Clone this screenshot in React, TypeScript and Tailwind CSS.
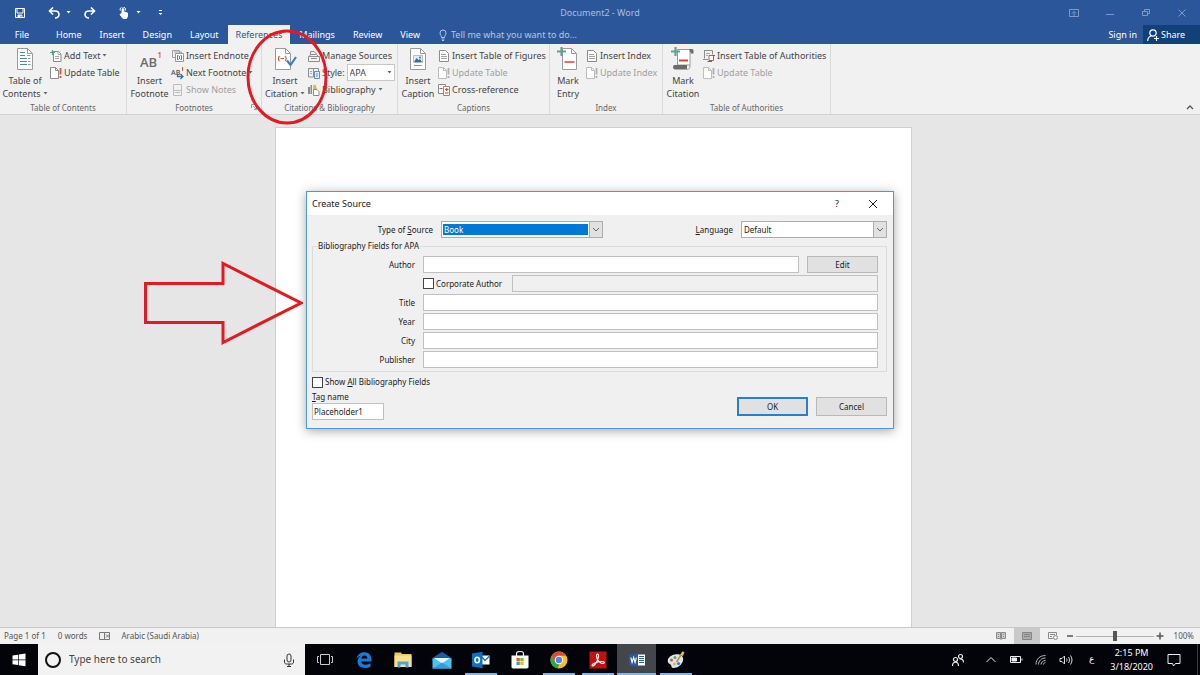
import { ReactNode, useState } from 'react';
import clsx from 'clsx';

type IconProps = { className?: string };

type SmallCommand = {
  label: string;
  icon: ReactNode;
  disabled?: boolean;
  caret?: boolean;
};

const Caret = ({ className }: IconProps) => (
  <svg viewBox="0 0 5 3" className={clsx('h-[3px] w-[5px] shrink-0', className)} fill="currentColor">
    <path d="M.5 0h4L2.500 2.500z" />
  </svg>
);

/* ---------- ribbon icons ---------- */

const TocIcon = () => (
  <svg viewBox="0 0 18 24" className="h-6 w-[18px]" fill="none">
    <path d="M1.5 1.5h10l5 5v16h-15z" fill="#fff" stroke="#9a9a9a" />
    <path d="M11.5 1.5v5h5" stroke="#9a9a9a" />
    <path d="M4 5.500h5M4 8.500h5M4 11.500h7M4 14.500h7M4 17.500h7" stroke="#4a84bd" />
    <path d="M12 11.500h2.500M12 14.500h2.500M12 17.500h2.500M11 8.500h3.500" stroke="#999" />
  </svg>
);

const FootnoteIcon = () => (
  <svg viewBox="0 0 26 24" className="h-6 w-[26px]" fontFamily="Open Sans" fontWeight="600">
    <text x="3" y="20" fontSize="13" fill="#6a6a6a">AB</text>
    <text x="20" y="11" fontSize="9" fill="#d9603b">1</text>
  </svg>
);

const CitationIcon = () => (
  <svg viewBox="0 0 24 24" className="h-6 w-6" fill="none">
    <path d="M2.500 1.500h10l5 5v16h-15z" fill="#fff" stroke="#9a9a9a" />
    <path d="M12.500 1.500v5h5" stroke="#9a9a9a" />
    <path d="M6.500 9c-1.500 1.500-1.500 4 0 5M12 9c1.500 1.500 1.500 4 0 5M7.500 11.500h3.500" stroke="#d65a3c" strokeWidth="1.200" />
    <path d="m14 13.500 3.500 4.500 5.500-8" stroke="#3f7cba" strokeWidth="2.200" />
  </svg>
);

const CaptionIcon = () => (
  <svg viewBox="0 0 18 24" className="h-6 w-[18px]" fill="none">
    <path d="M1.500 1.500h10l5 5v16h-15z" fill="#fff" stroke="#9a9a9a" />
    <path d="M11.500 1.500v5h5" stroke="#9a9a9a" />
    <path d="M4.500 8.500h9v7h-9z" fill="#e4eef7" stroke="#b4bcc4" />
    <path d="m5 15 2.500-4 2 2 1.500-1 2 3z" fill="#2f6eab" />
    <circle cx="11" cy="10.500" r="1" fill="#2f6eab" />
    <path d="M5 18.500h8" stroke="#999" />
  </svg>
);

const MarkEntryIcon = () => (
  <svg viewBox="0 0 22 24" className="h-6 w-[22px]" fill="none">
    <path d="M5.500 1.500h9l5 5v16h-14z" fill="#fff" stroke="#9a9a9a" />
    <path d="M14.500 1.500v5h5" stroke="#9a9a9a" />
    <path d="M4.500 0v9M0 4.500h9" stroke="#5ea68a" strokeWidth="2.200" />
    <path d="M7.500 15h10" stroke="#d2492c" strokeWidth="1.500" />
  </svg>
);

const MarkCitationIcon = () => (
  <svg viewBox="0 0 24 24" className="h-6 w-6" fill="none">
    <path d="M6.500 2.500h12.500v15.500H6.500z" fill="#fff" stroke="#9a9a9a" />
    <path d="M18 2h3c1.200 0 1.500 1 1.500 2v2.500H20z" fill="#6b6b6b" />
    <path d="M3.500 18H16v4.500H4c-2.500 0-2.500-4.500-.5-4.500z" fill="#6b6b6b" />
    <path d="M16 22.500c2 0 3-1 3-4.500" stroke="#9a9a9a" />
    <path d="M4.500 0v9M0 4.500h9" stroke="#5ea68a" strokeWidth="2.200" />
    <path d="M8 13.500h9" stroke="#d2492c" strokeWidth="2" />
  </svg>
);

const AddTextIcon = () => (
  <svg viewBox="0 0 12 12" className="size-3" fill="none">
    <path d="M3.500 1.500h5l2.500 2.500v7.500H3.500z" fill="#fff" stroke="#8c8c8c" />
    <path d="M8 1.500V4.500h3M5 6.500h4M5 8.500h4" stroke="#a5a5a5" />
    <path d="M2.500 0v5M0 2.500h5" stroke="#4f9e81" strokeWidth="1.200" />
  </svg>
);

const UpdateIcon = ({ muted = false }: { muted?: boolean }) => (
  <svg viewBox="0 0 12 12" className="size-3" fill="none">
    <path d="M.5.5h5l3 3v8h-8z" fill="#fff" stroke={muted ? '#bdbdbd' : '#8c8c8c'} />
    <path d="M5.500.5v3h3" stroke={muted ? '#bdbdbd' : '#8c8c8c'} />
    <path d="M10.500 1v6.500M10.500 9v2" stroke={muted ? '#b0b0b0' : '#d8572f'} strokeWidth="1.800" />
  </svg>
);

const EndnoteIcon = () => (
  <svg viewBox="0 0 12 12" className="size-3" fill="none">
    <path d="M.5.500h7v7h-7zM2 2h7.500v7" stroke="#a0a0a0" />
    <path d="M3.500 3.500h8v8h-8z" fill="#fff" stroke="#999" />
    <path d="M6.500 5.500h-1v4h1M8.500 5.500h1v4h-1M7.500 6v3" stroke="#4a84bd" />
  </svg>
);

const NextFootnoteIcon = () => (
  <svg viewBox="0 0 12 12" className="size-3 overflow-visible" fill="none">
    <text x="-1" y="8" fontSize="7" fontWeight="600" fill="#555" fontFamily="Open Sans">AB</text>
    <path d="M10.500 0v4" stroke="#d9603b" />
    <path d="M5.500 6.500v3h5M8.500 7l2.500 2.500-2.500 2.500" stroke="#3474b5" strokeWidth="1.300" />
  </svg>
);

const ShowNotesIcon = () => (
  <svg viewBox="0 0 12 12" className="size-3" fill="none" stroke="#bdbdbd">
    <path d="M1.500.500h8v11h-8zM1.500 6.500h8M3 8.500h5" />
  </svg>
);

const ManageIcon = () => (
  <svg viewBox="0 0 12 12" className="size-3" fill="none">
    <path d="M2.500 5V1.500H6L8.500 4M1 7l1.500-2.500h6L11 7" stroke="#8c8c8c" />
    <path d="M.5 6.500h11v5H.5z" fill="#f4f4f4" stroke="#8c8c8c" />
    <path d="M3 8.500h6" stroke="#8c8c8c" />
  </svg>
);

const StyleIcon = () => (
  <svg viewBox="0 0 12 12" className="size-3" fill="none">
    <path d="M.5 1.500h5v8.500h-5zM5.500 1.500h5v3" stroke="#8c8c8c" />
    <path d="M2 4.500h2M2 6.500h2" stroke="#aaa" />
    <path d="M6.500 4.500h5v7h-5z" fill="#e6f0f9" stroke="#5b8fc2" />
    <path d="M8 7h2M8 9h2" stroke="#5b8fc2" />
  </svg>
);

const BibliographyIcon = () => (
  <svg viewBox="0 0 12 12" className="size-3" fill="none">
    <path d="M0 3h2v7H0zM2.500 1h1.500v9H2.500z" fill="#8c8c8c" />
    <path d="m5 1.500 2.500-1L9 5l-1 5H5z" fill="#e3b65c" />
    <path d="M5.500 5.500h3.500l2 2v4H5.500z" fill="#fff" stroke="#8c8c8c" />
  </svg>
);

const PageLinesIcon = () => (
  <svg viewBox="0 0 12 12" className="size-3" fill="none">
    <path d="M1.500.500h6l3 3v8h-9z" fill="#fff" stroke="#8c8c8c" />
    <path d="M3 4.500h5M3 6.500h6M3 8.500h6" stroke="#a5a5a5" />
  </svg>
);

const CrossRefIcon = () => (
  <svg viewBox="0 0 12 12" className="size-3" fill="none">
    <path d="M.5.500h7v9h-7z" fill="#fff" stroke="#8c8c8c" />
    <path d="M5.500 2.500h6v9h-6z" fill="#fff" stroke="#8c8c8c" />
    <path d="M1.500 4.500h3M7 5.500h3.500M7 9h3.500M8.700 4v3" stroke="#d2492c" strokeWidth="1.200" />
  </svg>
);

const AuthoritiesIcon = () => (
  <svg viewBox="0 0 12 12" className="size-3" fill="none">
    <path d="M1 .5h8.500v4M1.500.500v8M0 9.500h5" stroke="#8c8c8c" />
    <path d="M3 3.500h4M3 5.500h2" stroke="#aaa" />
    <path d="M6 5.500h4.500v5H6z" fill="#fff" stroke="#b06050" />
    <path d="M4.500 11.500H9M10 5.500h2" stroke="#666" />
  </svg>
);

/* ---------- ribbon parts ---------- */

const BigButton = ({ icon, lines, caret, className }: { icon: ReactNode; lines: [string, string]; caret?: boolean; className: string }) => (
  <button type="button" className={clsx('flex shrink-0 flex-col items-center text-[9px] leading-[13px]', className)}>
    {icon}
    <span className="mt-[3px] whitespace-nowrap">{lines[0]}</span>
    <span className="flex items-center gap-0.5 whitespace-nowrap">
      {lines[1]}
      {caret && <Caret className="text-[#666]" />}
    </span>
  </button>
);

const SmallButton = ({ label, icon, disabled, caret }: SmallCommand) => (
  <button
    type="button"
    disabled={disabled}
    className="flex h-[17px] items-center gap-0.5 whitespace-nowrap text-[9px] leading-[13px] disabled:text-[#a0a0a0]"
  >
    {icon}
    {label}
    {caret && <Caret className="text-[#666]" />}
  </button>
);

const RibbonGroup = ({ label, className, children }: { label: string; className: string; children: ReactNode }) => (
  <section aria-label={label} className={clsx('relative flex shrink-0 flex-col border-r border-[#dadada] pt-[3px]', className)}>
    <div className="flex flex-1">{children}</div>
    <div className="pb-px text-center text-[8px] leading-[11px] text-[#666]">{label}</div>
  </section>
);

const Ribbon = () => {
  const [style, setStyle] = useState('APA');
  return (
    <div className="flex h-[71px] border-b border-[#d2d2d2] bg-[#f1f1f1] text-[#444]">
      <RibbonGroup label="Table of Contents" className="w-[127px]">
        <BigButton icon={<TocIcon />} lines={['Table of', 'Contents']} caret className="w-[50px]" />
        <div>
          <SmallButton icon={<AddTextIcon />} label="Add Text" caret />
          <SmallButton icon={<UpdateIcon />} label="Update Table" />
        </div>
      </RibbonGroup>

      <RibbonGroup label="Footnotes" className="w-[135px]">
        <BigButton icon={<FootnoteIcon />} lines={['Insert', 'Footnote']} className="w-[45px]" />
        <div>
          <SmallButton icon={<EndnoteIcon />} label="Insert Endnote" />
          <SmallButton icon={<NextFootnoteIcon />} label="Next Footnote" caret />
          <SmallButton icon={<ShowNotesIcon />} label="Show Notes" disabled />
        </div>
        <svg viewBox="0 0 6 6" className="absolute right-1 bottom-1 size-1.5" fill="none" stroke="#999">
          <path d="M.5 4V.500H4M2 2l3.500 3.500M5.500 3v2.500H3" />
        </svg>
      </RibbonGroup>

      <RibbonGroup label="Citations &amp; Bibliography" className="w-[136px]">
        <BigButton icon={<CitationIcon />} lines={['Insert', 'Citation']} caret className="w-[46px]" />
        <div>
          <SmallButton icon={<ManageIcon />} label="Manage Sources" />
          <div className="flex h-[17px] items-center gap-0.5 text-[9px] leading-[13px]">
            <StyleIcon />
            <label htmlFor="citation-style">Style:</label>
            <span className="flex h-[17px] w-[48px] items-center border border-[#c6c6c6] bg-white pr-0.5 pl-0.5">
              <select
                id="citation-style"
                value={style}
                onChange={(e) => setStyle(e.target.value)}
                className="min-w-0 flex-1 appearance-none outline-none"
              >
                <option>APA</option>
                <option>MLA</option>
                <option>Chicago</option>
              </select>
              <Caret className="text-[#666]" />
            </span>
          </div>
          <SmallButton icon={<BibliographyIcon />} label="Bibliography" caret />
        </div>
        {/* red ring around Insert Citation */}
        <svg viewBox="0 0 82 96" className="pointer-events-none absolute -top-[15px] -left-4 z-10 h-24 w-[82px]" fill="none">
          <ellipse cx="41" cy="48" rx="39" ry="46" stroke="#e01b24" strokeWidth="3" />
        </svg>
      </RibbonGroup>

      <RibbonGroup label="Captions" className="w-[152px]">
        <BigButton icon={<CaptionIcon />} lines={['Insert', 'Caption']} className="w-10" />
        <div>
          <SmallButton icon={<PageLinesIcon />} label="Insert Table of Figures" />
          <SmallButton icon={<UpdateIcon muted />} label="Update Table" disabled />
          <SmallButton icon={<CrossRefIcon />} label="Cross-reference" />
        </div>
      </RibbonGroup>

      <RibbonGroup label="Index" className="w-[113px]">
        <BigButton icon={<MarkEntryIcon />} lines={['Mark', 'Entry']} className="w-9" />
        <div>
          <SmallButton icon={<PageLinesIcon />} label="Insert Index" />
          <SmallButton icon={<UpdateIcon muted />} label="Update Index" disabled />
        </div>
      </RibbonGroup>

      <RibbonGroup label="Table of Authorities" className="w-[168px]">
        <BigButton icon={<MarkCitationIcon />} lines={['Mark', 'Citation']} className="w-10" />
        <div>
          <SmallButton icon={<AuthoritiesIcon />} label="Insert Table of Authorities" />
          <SmallButton icon={<UpdateIcon muted />} label="Update Table" disabled />
        </div>
      </RibbonGroup>

      <button type="button" aria-label="Collapse ribbon" className="mt-auto mr-1.5 mb-1 ml-auto">
        <svg viewBox="0 0 8 6" className="h-1.5 w-2" fill="none" stroke="#555" strokeWidth="1.300">
          <path d="m1 5 3-3 3 3" />
        </svg>
      </button>
    </div>
  );
};

/* ---------- title bar and tabs ---------- */

const TitleBar = () => (
  <div className="flex h-[25px] items-center bg-[#2b579a] text-[9px] text-white">
    <div className="flex flex-1 items-center">
      <button type="button" aria-label="Save" className="ml-3.5">
        <svg viewBox="0 0 12 12" className="size-3" fill="none" stroke="currentColor">
          <path d="M1.500 1.500h9v9h-9zM3 1.500v4.500h6V1.500M4 10.500V8h4v2.500" />
          <path d="M4 8h2.500v2.500H4z" fill="currentColor" stroke="none" />
        </svg>
      </button>
      <button type="button" aria-label="Undo" className="ml-[22px] flex items-center gap-1.5">
        <svg viewBox="0 0 12 12" className="size-3" fill="none" stroke="currentColor" strokeWidth="1.600">
          <path d="M5 .5 1.500 4 5 7.500M1.500 4H7c2.500 0 4 1.300 4 3.500S9 11 7 11" />
        </svg>
        <Caret />
      </button>
      <button type="button" aria-label="Redo" className="ml-[13px]">
        <svg viewBox="0 0 12 12" className="size-3" fill="none" stroke="currentColor" strokeWidth="1.600">
          <path d="M7 .5 10.500 4 7 7.500M10.500 4H5C2.500 4 1 5.300 1 7.500S3 11 5 11" />
        </svg>
      </button>
      <button type="button" aria-label="Touch mode" className="ml-[22px] flex items-center gap-1.5">
        <svg viewBox="0 0 12 12" className="size-3" fill="none" stroke="currentColor">
          <path d="M4 6.500V2.500c0-1.300 1.800-1.300 1.800 0V5l3.700 1v3L8.500 11.500H5L2 7.500l.8-.6z" fill="currentColor" />
          <path d="M2.300 3.500a2.700 2.700 0 1 1 5 0" />
        </svg>
        <Caret />
      </button>
      <button type="button" aria-label="Customize toolbar" className="ml-[17px]">
        <svg viewBox="0 0 5 6" className="h-1.5 w-[5px]" fill="currentColor">
          <path d="M1 0h3v1H1zM.5 3h4l-2 2z" />
        </svg>
      </button>
    </div>
    <h1 className="text-[#a9bfe0]">Document2 - Word</h1>
    <div className="flex flex-1 justify-end text-[#7d9acb]">
      <button type="button" aria-label="Ribbon display options" className="flex w-9 justify-center">
        <svg viewBox="0 0 12 10" className="h-2.5 w-3" fill="none" stroke="currentColor">
          <path d="M1.500 1.500h9v7h-9zM6 8V3.500M4 5.500l2-2 2 2" />
        </svg>
      </button>
      <button type="button" aria-label="Minimize" className="flex w-9 justify-center">
        <svg viewBox="0 0 10 10" className="size-2.5" stroke="currentColor"><path d="M1 6.500h8" /></svg>
      </button>
      <button type="button" aria-label="Restore" className="flex w-9 justify-center">
        <svg viewBox="0 0 10 10" className="size-2.5" fill="none" stroke="currentColor">
          <path d="M1.500 3.500h5v4h-5zM3.500 3.500V1.500h5v4H7" />
        </svg>
      </button>
      <button type="button" aria-label="Close" className="flex w-9 justify-center">
        <svg viewBox="0 0 10 10" className="size-2.5" stroke="currentColor"><path d="m1.500 1.500 7 7m0-7-7 7" /></svg>
      </button>
    </div>
  </div>
);

const TABS = ['Home', 'Insert', 'Design', 'Layout', 'References', 'Mailings', 'Review', 'View'];

const TabBar = () => (
  <div className="flex h-[19px] bg-[#2b579a] text-[9px] text-white">
    <button type="button" className="mr-[3px] w-11">File</button>
    {TABS.map((tab) => (
      <button
        key={tab}
        type="button"
        className={clsx(tab === 'References' ? 'bg-[#f1f1f1] px-2 text-[#2b579a]' : 'px-[9px]')}
      >
        {tab}
      </button>
    ))}
    <label className="ml-2.5 flex items-center gap-1 text-[#b4c7e5]">
      <svg viewBox="0 0 8 12" className="h-3 w-2 shrink-0" fill="none" stroke="currentColor">
        <path d="M2.500 8.500C2.500 6.500 1 6 1 4a3 3 0 0 1 6 0c0 2-1.500 2.500-1.500 4.500zM2.500 10h3M3 11.500h2" />
      </svg>
      <input
        aria-label="Tell me what you want to do"
        placeholder="Tell me what you want to do..."
        className="w-36 outline-none placeholder:text-[#b4c7e5]"
      />
    </label>
    <button type="button" className="mr-1.5 ml-auto">Sign in</button>
    <button type="button" className="flex w-[57px] items-center gap-0.5 bg-[#124078] pl-1">
      <svg viewBox="0 0 12 12" className="size-3" fill="none" stroke="currentColor" strokeWidth="1.200">
        <circle cx="6" cy="4" r="3.200" />
        <path d="M.7 12c0-3 1.500-4.500 3.500-5M9.500 7v5M7 9.500h5" />
      </svg>
      Share
    </button>
  </div>
);

/* ---------- Create Source dialog ---------- */

const DropArrow = () => (
  <span className="pointer-events-none flex w-[13px] shrink-0 items-center justify-center border-l border-[#adadad] bg-[#e1e1e1]">
    <svg viewBox="0 0 8 5" className="h-[5px] w-2" fill="none" stroke="#666">
      <path d="m1 1 3 3 3-3" />
    </svg>
  </span>
);

const fieldClass = 'h-[17px] min-w-0 flex-1 border border-[#c0c0c0] bg-white px-0.5 outline-none';
const labelClass = 'mr-2 w-[102px] shrink-0 text-right';
const buttonClass = 'shrink-0 border border-[#b9b9b9] bg-[#e1e1e1] text-center';
const checkClass = 'size-[11px] shrink-0 appearance-none border border-[#444] bg-white checked:bg-[#0078d7]';

const CreateSourceDialog = () => {
  const [fields, setFields] = useState({ title: '', year: '', city: '', publisher: '' });
  const [corporate, setCorporate] = useState(false);
  const [tagName, setTagName] = useState('Placeholder1');

  return (
    <div
      role="dialog"
      aria-label="Create Source"
      className="border border-[#4c9ad0] bg-[#f0f0f0] text-[8px] leading-3 text-[#1a1a1a] shadow-[0_2px_10px_rgba(0,0,0,0.35)]"
    >
      <div className="flex h-[23px] items-center bg-white pl-[5px] text-[9px]">
        <h2 className="flex-1">Create Source</h2>
        <button type="button" aria-label="Help" className="w-9">?</button>
        <button type="button" aria-label="Close dialog" className="mr-0.5 flex w-9 justify-center">
          <svg viewBox="0 0 10 10" className="size-2.5" stroke="#222"><path d="m1 1 8 8m0-8-8 8" /></svg>
        </button>
      </div>

      <form className="pt-1.5 pr-1.5 pb-2 pl-[5px]" onSubmit={(e) => e.preventDefault()}>
        <div className="mb-0.5 flex h-[17px] items-center">
          <label htmlFor="source-type" className="mr-2 w-[121px] text-right">
            Type of <u>S</u>ource
          </label>
          <span className="flex h-[17px] w-[162px] border border-[#adadad] bg-white">
            <select id="source-type" className="mx-px my-0.5 min-w-0 flex-1 appearance-none bg-[#0078d7] pl-px leading-[11px] text-white outline-none">
              <option>Book</option>
              <option>Journal Article</option>
              <option>Web site</option>
            </select>
            <DropArrow />
          </span>
          <label htmlFor="source-language" className="mr-2 ml-auto">
            <u>L</u>anguage
          </label>
          <span className="flex h-[17px] w-[146px] border border-[#adadad] bg-white">
            <select id="source-language" className="min-w-0 flex-1 appearance-none pl-0.5 outline-none">
              <option>Default</option>
              <option>English</option>
            </select>
            <DropArrow />
          </span>
        </div>

        <fieldset className="border border-[#dcdcdc] pt-1 pr-2 pb-[3px]">
          <legend className="ml-1 px-px">Bibliography Fields for APA</legend>
          <div className="flex flex-col gap-0.5">
            <div className="flex items-center">
              <label htmlFor="author" className={labelClass}>Author</label>
              <input id="author" className={fieldClass} />
              <button type="button" className={clsx(buttonClass, 'ml-2 h-[17px] w-[71px]')}>Edit</button>
            </div>
            <div className="flex items-center">
              <label className="mr-2 ml-[110px] flex w-[81px] items-center gap-0.5 whitespace-nowrap">
                <input
                  type="checkbox"
                  className={checkClass}
                  checked={corporate}
                  onChange={(e) => setCorporate(e.target.checked)}
                />
                Corporate Author
              </label>
              <input
                aria-label="Corporate author name"
                disabled={!corporate}
                className={clsx(fieldClass, 'disabled:bg-[#f0f0f0]')}
              />
            </div>
            {(['title', 'year', 'city', 'publisher'] as const).map((name) => (
              <div key={name} className="flex items-center">
                <label htmlFor={name} className={clsx(labelClass, 'capitalize')}>{name}</label>
                <input
                  id={name}
                  value={fields[name]}
                  onChange={(e) => setFields({ ...fields, [name]: e.target.value })}
                  className={fieldClass}
                />
              </div>
            ))}
          </div>
        </fieldset>

        <div className="mt-1 flex items-end justify-between">
          <div className="flex flex-col items-start">
            <label className="flex h-3 items-center gap-0.5">
              <input type="checkbox" className={checkClass} />
              <span>Show <u>A</u>ll Bibliography Fields</span>
            </label>
            <label htmlFor="tag-name" className="mt-[3px]"><u>T</u>ag name</label>
            <input
              id="tag-name"
              value={tagName}
              onChange={(e) => setTagName(e.target.value)}
              className="h-[17px] w-[72px] border border-[#c0c0c0] bg-white px-px outline-none"
            />
          </div>
          <div className="mb-1 flex gap-2">
            <button type="submit" className="h-[19px] w-[71px] border-2 border-[#2a7fca] bg-[#e1e1e1]">OK</button>
            <button type="button" className={clsx(buttonClass, 'h-[19px] w-[71px]')}>Cancel</button>
          </div>
        </div>
      </form>
    </div>
  );
};

/* ---------- status bar ---------- */

const StatusBar = () => (
  <div className="flex h-[17px] items-center border-t border-[#c8c8c8] bg-[#f1f1f1] pl-1 text-[8px] text-[#555]">
    <span>Page 1 of 1</span>
    <span className="ml-3">0 words</span>
    <svg viewBox="0 0 12 10" className="ml-3 h-2.5 w-3" fill="none" stroke="#777">
      <path d="M5.500 1.500h-5v7h5zM5.500 1.500h5v7h-5zM7 3.500l3 3M10 3.500l-3 3" />
    </svg>
    <span className="ml-2.5">Arabic (Saudi Arabia)</span>

    <button type="button" aria-label="Read mode" className="ml-auto flex h-full w-[26px] items-center justify-center">
      <svg viewBox="0 0 10 8" className="h-2 w-2.5" fill="none" stroke="#8a8a8a">
        <path d="M.5.500h4v6h-4zM5.500.500h4v6h-4z" fill="#ccc" />
        <path d="M2 2.500h1M2 4.500h1M7 2.500h1M7 4.500h1M5 0v8" />
      </svg>
    </button>
    <button type="button" aria-label="Print layout" className="flex h-full w-[26px] items-center justify-center bg-[#c9c9c9]">
      <svg viewBox="0 0 10 8" className="h-2 w-2.5" fill="none" stroke="#858585">
        <path d="M.5.500h9v7h-9z" fill="#aaa" />
        <path d="M2 2.500h6M2 4.500h6" />
      </svg>
    </button>
    <button type="button" aria-label="Web layout" className="flex h-full w-[26px] items-center justify-center">
      <svg viewBox="0 0 10 8" className="h-2 w-2.5" fill="none" stroke="#8a8a8a">
        <path d="M5 6.500H.500v-6h8V3M2 2.500h5M2 4.500h2" />
        <circle cx="7.500" cy="5.500" r="2" />
      </svg>
    </button>
    <button type="button" aria-label="Zoom out" className="w-2.5">
      <svg viewBox="0 0 8 8" className="size-2" stroke="#555" strokeWidth="1.500"><path d="M1 4h6" /></svg>
    </button>
    <input
      type="range"
      aria-label="Zoom"
      min={10}
      max={190}
      defaultValue={100}
      className="mr-0.5 h-2.5 w-[78px] appearance-none bg-[linear-gradient(#b0b0b0,#b0b0b0)] bg-[length:100%_1px] bg-center bg-no-repeat [&::-webkit-slider-thumb]:h-2.5 [&::-webkit-slider-thumb]:w-1 [&::-webkit-slider-thumb]:appearance-none [&::-webkit-slider-thumb]:bg-[#555]"
    />
    <button type="button" aria-label="Zoom in">
      <svg viewBox="0 0 8 8" className="size-2" stroke="#555" strokeWidth="1.500"><path d="M.5 4h7M4 .5v7" /></svg>
    </button>
    <span className="mr-1.5 ml-2.5">100%</span>
  </div>
);

/* ---------- taskbar ---------- */

type TaskApp = { name: string; icon: ReactNode; running?: boolean; active?: boolean };

const APPS: TaskApp[] = [
  {
    name: 'Task view',
    icon: (
      <svg viewBox="0 0 18 18" className="size-[18px]" fill="none" stroke="#ccc">
        <path d="M4.500 3.500h9v10h-9zM3 5.500H1.500v6H3M15 5.500h1.500v6H15" />
      </svg>
    ),
  },
  {
    name: 'Edge',
    icon: (
      <svg viewBox="0 0 18 18" className="size-[18px]">
        <path
          d="M1.500 8.200C2.200 3.800 5.300 1.200 9.300 1.200c4.500 0 7.200 3.100 7.200 7.300v2H6.200c.2 2.200 2 3.200 4.300 3.200 1.900 0 3.600-.5 5-1.400v3.400c-1.500.9-3.500 1.300-5.600 1.300-4.600 0-7.400-2.600-7.400-6.400 0-2.700 1.500-4.800 3.900-6-2.200.5-3.900 1.800-4.900 3.600zM6.400 7.500h5.900c0-2-1-3-2.800-3-1.700 0-2.800 1.200-3.100 3z"
          fill="#1a7bd7"
        />
      </svg>
    ),
  },
  {
    name: 'File Explorer',
    icon: (
      <svg viewBox="0 0 18 18" className="size-[18px]">
        <path d="M.5 1.500H7l1 1.500h9.500v13H.500z" fill="#e9c660" />
        <path d="M.5 4.500h17v11.500H.500z" fill="#fbe08a" />
        <path d="M3.500 16.500v-6h11v6h-3v-3h-5v3z" fill="#4aa5dc" />
      </svg>
    ),
  },
  {
    name: 'Mail',
    icon: (
      <svg viewBox="0 0 20 18" className="h-[18px] w-5">
        <path d="M.5 7 10 .8 19.500 7v3H.500z" fill="#1261a8" />
        <path d="M.5 7.500h19v10H.500z" fill="#4fc3f0" />
        <path d="M2 7h16l-8 5.500z" fill="#e6f4fb" />
        <path d="m.5 17.500 9.500-6 9.500 6z" fill="#2aa1de" />
      </svg>
    ),
  },
  {
    name: 'Outlook',
    running: true,
    icon: (
      <svg viewBox="0 0 18 18" className="size-[18px]">
        <path d="M9 4.500h8.500v9H9z" fill="#fff" />
        <path d="m10 6 3 3.500L17.500 5" stroke="#1273c5" strokeWidth="1.300" fill="none" />
        <path d="M0 2.500 10.500.800v16.400L0 15.500z" fill="#0f70c0" />
        <ellipse cx="5.200" cy="9" rx="2.200" ry="2.800" stroke="#fff" strokeWidth="1.600" fill="none" />
      </svg>
    ),
  },
  {
    name: 'Store',
    icon: (
      <svg viewBox="0 0 18 18" className="size-[18px]">
        <path d="M5.500 5V2.500C5.500-.2 12.500-.2 12.500 2.500V5" stroke="#eee" strokeWidth="1.200" fill="none" />
        <path d="M.5 4.500h17v12L16 17.500H2L.5 16.500z" fill="#fff" />
        <path d="M5.500 7h3.300v3.300H5.500z" fill="#e8502f" />
        <path d="M9.300 7h3.300v3.300H9.300z" fill="#7db928" />
        <path d="M5.500 10.800h3.300v3.300H5.500z" fill="#2b9fe0" />
        <path d="M9.300 10.800h3.300v3.300H9.300z" fill="#f4b41a" />
      </svg>
    ),
  },
  {
    name: 'Chrome',
    running: true,
    icon: (
      <svg viewBox="0 0 18 18" className="size-[18px]">
        <circle cx="9" cy="9" r="8.500" fill="#fbc116" />
        <path d="M1.640 4.750A8.500 8.500 0 0 1 16.360 4.750H9A4.200 4.200 0 0 0 5.200 10.700z" fill="#de4b3c" />
        <path d="M1.640 4.750 5.400 11.200A4.200 4.200 0 0 0 9.500 13.200L7.500 17.400A8.500 8.500 0 0 1 1.640 4.750z" fill="#32a350" />
        <circle cx="9" cy="9" r="4.200" fill="#fff" />
        <circle cx="9" cy="9" r="3.200" fill="#4787f0" />
      </svg>
    ),
  },
  {
    name: 'Acrobat Reader',
    running: true,
    icon: (
      <svg viewBox="0 0 18 18" className="size-[18px]">
        <path d="M.5.500h17v17H.500z" fill="#c3110f" />
        <path
          d="M3 14.500c0-2 6-4 10-4 3 0 3 2 1 2-3 0-6.500-4-6.500-7.500 0-2.500 2-2.500 2 0 0 3.500-3.500 9.500-5.500 10-.7 0-1 0-1-.5z"
          fill="none"
          stroke="#fff"
          strokeWidth="1.100"
        />
      </svg>
    ),
  },
  {
    name: 'Word',
    running: true,
    active: true,
    icon: (
      <svg viewBox="0 0 18 18" className="size-[18px]">
        <path d="M9 3.500h8v11H9z" fill="#fff" />
        <path d="M11 5.500h5M11 7.500h5M11 9.500h5M11 11.500h5" stroke="#2b579a" />
        <path d="M1 3.300 10 2v14l-9-1.300z" fill="#2b579a" />
        <path d="m2.800 6.500 1.300 5 1.500-5 1.500 5 1.300-5" stroke="#fff" strokeWidth="1.100" fill="none" />
      </svg>
    ),
  },
  {
    name: 'Paint',
    running: true,
    icon: (
      <svg viewBox="0 0 18 18" className="size-[18px]">
        <path d="M8 3.500c5-1 9 1.500 8 6-.8 4-5 7.500-9.500 7.500-2.500 0-1.500-2.500-3-3.500S.500 12 .8 9.300C1.200 6.500 4 4.200 8 3.500z" fill="#dbe7ee" />
        <circle cx="4.500" cy="9" r="1.500" fill="#d6523f" />
        <circle cx="8" cy="6.500" r="1.500" fill="#56a552" />
        <circle cx="11.500" cy="12.500" r="1.600" fill="#3d7fd0" />
        <circle cx="7.500" cy="13" r="1.500" fill="#e8b931" />
        <path d="m9.500 11 5-8" stroke="#c98b3e" strokeWidth="1.600" />
        <path d="m13.500 4 1.500-3.500L17.500 1l-1.500 4z" fill="#e3bd7a" />
      </svg>
    ),
  },
];

const Taskbar = () => (
  <div className="flex h-[31px] bg-[#02040a] text-white">
    <button type="button" aria-label="Start" className="flex w-[38px] items-center justify-center">
      <svg viewBox="0 0 14 14" className="size-3.5" fill="#fff">
        <path d="m.5 2.500 5.500-.8V6.500H.500zM6.700 1.600 13.500.5v6H6.700zM.5 7.300H6v4.800l-5.500-.8zM6.700 7.300h6.800v6l-6.800-1z" />
      </svg>
    </button>
    <label className="flex w-[267px] items-center bg-[#f2f2f2] pr-2.5 pl-[7px]">
      <svg viewBox="0 0 16 16" className="size-4 shrink-0" fill="none" stroke="#111" strokeWidth="2">
        <circle cx="8" cy="8" r="7" />
      </svg>
      <input
        aria-label="Type here to search"
        placeholder="Type here to search"
        className="ml-2 min-w-0 flex-1 text-[10px] text-[#333] outline-none placeholder:text-[#444]"
      />
      <svg viewBox="0 0 12 14" className="h-3.5 w-3 shrink-0" fill="none" stroke="#333">
        <rect x="4" y="1" width="4" height="8" rx="2" />
        <path d="M1.500 6.500v2.500c0 1.500 1 2 2 2h5c1 0 2-.5 2-2V6.500M6 11v2M4 13.500h4" />
      </svg>
    </label>

    <div className="flex">
      {APPS.map((app) => (
        <button
          key={app.name}
          type="button"
          aria-label={app.name}
          className={clsx('flex w-[39px] flex-col items-center', app.active && 'bg-[#43464b]')}
        >
          <span className="flex flex-1 items-center">{app.icon}</span>
          <span className={clsx('-mt-0.5 h-0.5', app.active ? 'w-full' : 'w-8', app.running && 'bg-[#76b9ed]')} />
        </button>
      ))}
    </div>

    <div className="ml-auto flex items-center">
      <svg viewBox="0 0 14 14" className="mr-5 size-3.5" fill="none" stroke="#eee" strokeWidth="1.200">
        <circle cx="9.500" cy="3.500" r="2" />
        <circle cx="4.500" cy="6.500" r="2" />
        <path d="M1.500 13c0-5 6-5 6 0M8.500 6c2.500-.5 4 .8 4 3.500" />
      </svg>
      <svg viewBox="0 0 12 12" className="mr-[13px] size-3" fill="none" stroke="#eee">
        <path d="m1.500 8 4.500-4.500L10.500 8" />
      </svg>
      <svg viewBox="0 0 13 10" className="mr-3 h-2.5 w-[13px]" fill="none" stroke="#eee">
        <path d="M.5 1.500h10v6H.500zM12 3.500v2" />
        <path d="M2 3h4.500v3H2z" fill="#eee" />
      </svg>
      <svg viewBox="0 0 12 12" className="mr-3 size-3" fill="none" stroke="#bbb">
        <path d="M1 10.500C1 5 5 1.500 10.500 1.500M3.500 10.500c0-3.500 3-6.500 7-6.500M6 10.500C6 8.500 8 6.500 10.500 6.500M8.500 10.500c0-1 1-2 2-2" />
      </svg>
      <svg viewBox="0 0 14 12" className="mr-4 h-3 w-3.5" fill="none" stroke="#ddd">
        <path d="M1 4.500h2L5.500 2v8L3 7.500H1zM7.500 4.500c.7 1 .7 2 0 3M9.500 3c1.300 2 1.300 4 0 6M11.500 1.500c2 3 2 6 0 9" />
      </svg>
      <span lang="ar" className="mr-4 font-['DejaVu_Sans',sans-serif] text-[9px]">ع</span>
      <div className="text-center text-[9px] leading-[14px]">
        <div>2:15 PM</div>
        <div>3/18/2020</div>
      </div>
      <button type="button" aria-label="Notifications" className="mr-4 ml-3.5">
        <svg viewBox="0 0 14 14" className="size-3.5" fill="none" stroke="#eee">
          <path d="M1 1.500h12v9H8.500L6.500 13l-1-2.500H1z" />
        </svg>
      </button>
      <span className="mr-0.5 h-[31px] w-px bg-[#3a3d42]" />
    </div>
  </div>
);

const App = () => (
  <div className="flex min-h-screen flex-col overflow-hidden font-['Noto_Sans',sans-serif]">
    <TitleBar />
    <TabBar />
    <Ribbon />

    <main className="relative flex flex-1 justify-center bg-[#e6e6e6] pt-3 pr-[13px]">
      <div className="w-[637px] border border-b-0 border-[#cfcfcf] bg-white" />

      <div className="absolute top-[76px] left-1/2 w-[588px] -translate-x-1/2">
        <CreateSourceDialog />
        {/* arrow pointing at the dialog */}
        <svg viewBox="0 0 160 84" className="absolute top-[70px] right-full mr-[3px] h-[84px] w-40" fill="none">
          <path
            d="M2.500 22.500H80V2.500L158 42 80 81.500v-20H2.500z"
            stroke="#e01b24"
            strokeWidth="3"
          />
        </svg>
      </div>
    </main>

    <StatusBar />
    <Taskbar />
  </div>
);

export default App;
